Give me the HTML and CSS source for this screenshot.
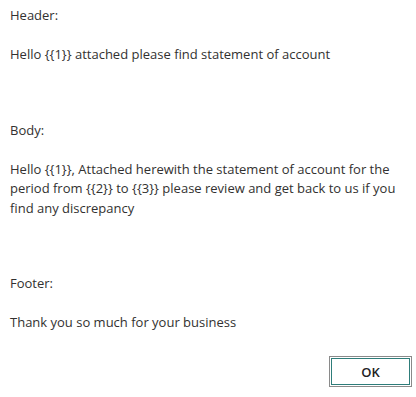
FILE: index.html
```html
<!DOCTYPE html>
<html>
  <head>
    <link rel="stylesheet" href="styles.css">
  </head>
  <body>
    <div class="dialog">
      <div class="message">
        <p>Header:</p>
        <p>Hello {{1}} attached please find statement of account</p>
        <p class="gap">Body:</p>
        <p>Hello {{1}}, Attached herewith the statement of account for the period from {{2}} to {{3}} please review and get back to us if you find any discrepancy</p>
        <p class="gap">Footer:</p>
        <p>Thank you so much for your business</p>
      </div>
      <div class="actions">
        <button class="btn-ok">OK</button>
      </div>
    </div>
  </body>
</html>
```
FILE: styles.css
```css
body {margin: 0; background-color: #fff; font-family: "Open Sans", "Noto Sans", sans-serif; color: #323130}

.dialog {display: flex; flex-direction: column; padding: 6px 4px 9px 10px; width: 416px; box-sizing: border-box}
.message {font-size: 13px; line-height: 19.5px; padding-right: 10px}
.message p {margin: 0 0 19.5px 0}
.message p.gap {margin-top: 56px}

.actions {display: flex; justify-content: flex-end; margin-top: 4px}
.btn-ok {width: 83px; height: 31px; background: #fff; border: 1px solid #8a8a8a; box-shadow: inset 0 0 0 1px #fff, inset 0 0 0 2px #2e7d7a; font-family: "Open Sans", sans-serif; font-size: 13px; font-weight: 600; color: #222; padding: 0}
```
